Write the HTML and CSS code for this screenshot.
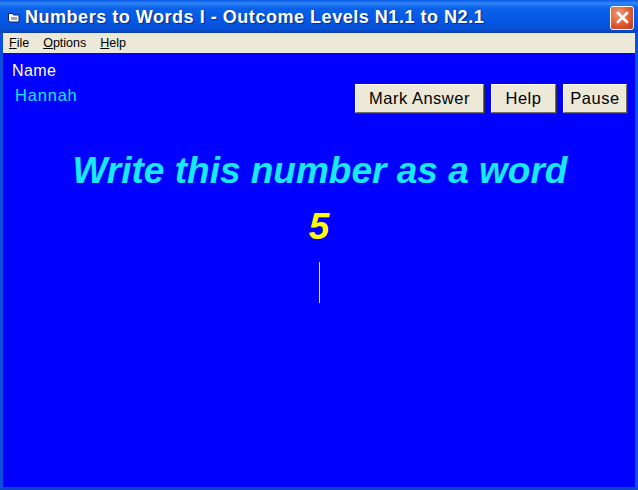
FILE: index.html
```html
<!DOCTYPE html>
<html lang="en">

<head>
    <meta charset="UTF-8">
    <title>Numbers to Words I - Outcome Levels N1.1 to N2.1</title>
    <link rel="stylesheet" href="styles.css">
</head>

<body>
    <div class="window">
        <div class="titlebar">
            <svg class="app-icon" width="12" height="12" viewBox="0 0 12 12">
                <path d="M.5 1.5h4l1 1.5h5.500v7H2L.5 8.500z" fill="#fff" stroke="#10206a" stroke-width="1" />
                <path d="M3 5h6v3H3z" fill="#9aa6c8" />
            </svg>
            <span class="title">Numbers to Words I - Outcome Levels N1.1 to N2.1</span>
            <button class="close">
                <svg width="13" height="13" viewBox="0 0 13 13">
                    <path d="M2 2l9 9M11 2l-9 9" stroke="#fff" stroke-width="2.6" stroke-linecap="square" />
                </svg>
            </button>
        </div>
        <div class="menubar">
            <span class="menu"><u>F</u>ile</span>
            <span class="menu"><u>O</u>ptions</span>
            <span class="menu"><u>H</u>elp</span>
        </div>
        <div class="content">
            <div class="top-row">
                <div class="student">
                    <div class="name-label">Name</div>
                    <div class="name-value">Hannah</div>
                </div>
                <div class="btn-group">
                    <button class="btn btn-mark">Mark Answer</button>
                    <button class="btn btn-help">Help</button>
                    <button class="btn btn-pause">Pause</button>
                </div>
            </div>
            <h1 class="question">Write this number as a word</h1>
            <div class="number">5</div>
            <div class="caret"></div>
        </div>
    </div>
</body>

</html>
```

FILE: styles.css
```css
* {
    margin: 0;
    padding: 0;
    box-sizing: border-box;
}

body {
    width: 638px;
    height: 490px;
    overflow: hidden;
    font-family: "Liberation Sans", Arial, sans-serif;
}

.window {
    width: 638px;
    height: 490px;
    display: flex;
    flex-direction: column;
    background-color: #0000ff;
    border-left: 3px solid #0a4fe0;
    border-right: 3px solid #0a4fe0;
    border-bottom: 3px solid #0a45cc;
}

.titlebar {
    height: 33px;
    margin: 0 -3px;
    padding: 2px 4px 0 8px;
    display: flex;
    align-items: center;
    background: linear-gradient(to bottom, #0a5ae8 0%, #2f86f5 10%, #0a62ea 24%, #0455e2 70%, #0650d4 90%, #0a3cb0 100%);
}

.app-icon {
    flex: none;
}

.title {
    margin-left: 5px;
    flex: 1;
    color: #fff;
    font-size: 18px;
    font-weight: bold;
    letter-spacing: 0.53px;
    white-space: nowrap;
    text-shadow: 1px 1px 1px #0a2a8c;
}

.close {
    width: 24px;
    height: 24px;
    display: flex;
    align-items: center;
    justify-content: center;
    border: 1px solid #fff;
    border-radius: 3px;
    background: radial-gradient(circle at 35% 30%, #ef9a7c, #df5a30 55%, #b9381a);
}

.menubar {
    height: 20px;
    padding: 0 0 0 6px;
    display: flex;
    align-items: center;
    gap: 14px;
    background-color: #ece9d8;
    color: #000;
    font-size: 12.5px;
}

.content {
    flex: 1;
    padding-top: 9px;
    display: flex;
    flex-direction: column;
    align-items: center;
}

.top-row {
    width: 100%;
    display: flex;
    justify-content: space-between;
}

.student {
    padding-left: 9px;
    font-size: 16px;
}

.name-label {
    color: #fff;
    letter-spacing: 0.4px;
}

.name-value {
    margin-top: 6px;
    padding-left: 3px;
    color: #18e8f8;
    font-size: 16.5px;
    letter-spacing: 0.8px;
}

.btn-group {
    margin-top: 22px;
    padding-right: 8px;
    display: flex;
    gap: 7px;
}

.btn {
    height: 29px;
    background-color: #ece9d8;
    border: 1px solid #fff;
    border-right-color: #6f6d62;
    border-bottom-color: #6f6d62;
    box-shadow: 1px 1px 0 #303030;
    color: #000;
    font-family: "Liberation Sans", Arial, sans-serif;
    font-size: 16.5px;
    letter-spacing: 0.5px;
}

.btn-mark {
    width: 129px;
}

.btn-help {
    width: 65px;
}

.btn-pause {
    width: 64px;
}

.question {
    margin-top: 37px;
    padding-left: 2px;
    color: #18e8f8;
    font-size: 37px;
    font-style: italic;
    font-weight: bold;
    line-height: 42px;
    white-space: nowrap;
}

.number {
    margin-top: 14px;
    color: #ffff00;
    font-size: 37px;
    font-style: italic;
    font-weight: bold;
    line-height: 42px;
}

.caret {
    width: 1px;
    height: 41px;
    margin-top: 14px;
    background-color: #f0e8a8;
}
```
